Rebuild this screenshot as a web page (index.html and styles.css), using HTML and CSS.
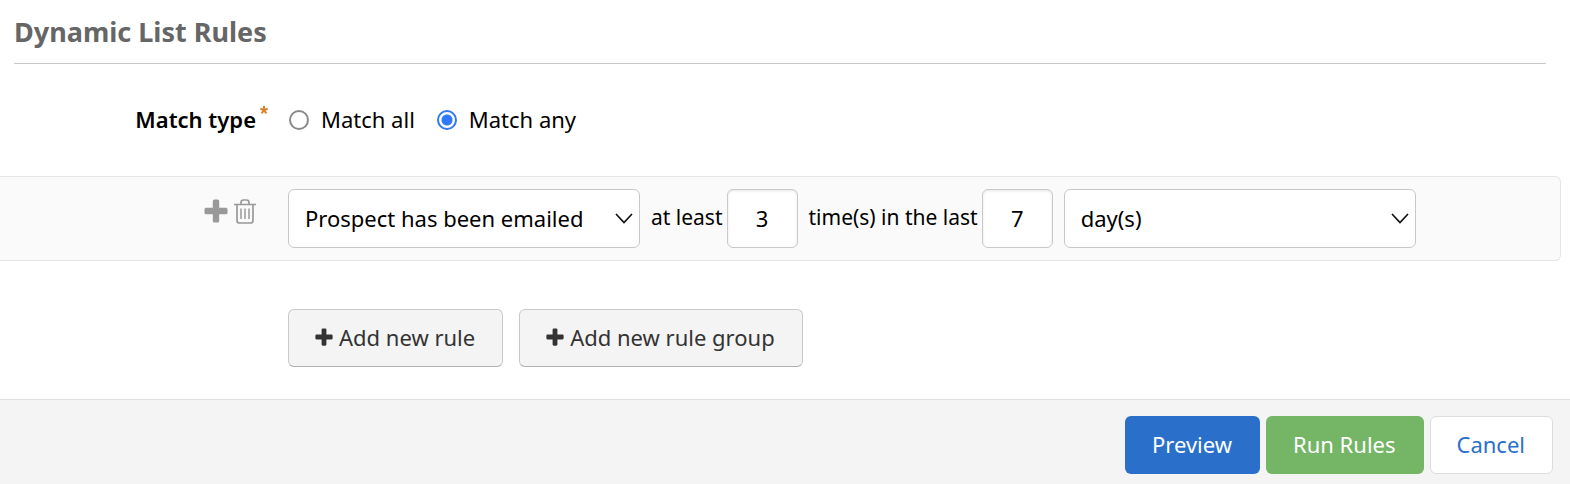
FILE: index.html
```html
<!DOCTYPE html>
<html lang="en">
<head>
<meta charset="utf-8">
<title>Dynamic List Rules</title>
<link rel="stylesheet" href="styles.css">
</head>
<body>
<svg class="sprite" aria-hidden="true">
  <symbol id="plus" viewBox="0 0 24 24">
    <path d="M10.300 .5h3.400q1.500 0 1.500 1.500v6.800h6.800q1.500 0 1.500 1.500v3.400q0 1.500-1.500 1.500h-6.800v6.800q0 1.500-1.500 1.500h-3.400q-1.500 0-1.500-1.500v-6.800H2q-1.500 0-1.500-1.500v-3.400q0-1.500 1.500-1.500h6.800V2q0-1.500 1.500-1.500z" fill="currentColor"/>
  </symbol>
</svg>
<form class="page">
  <h1 class="title">Dynamic List Rules</h1>

  <div class="match" role="radiogroup" aria-labelledby="match-label">
    <div class="match-label"><span id="match-label">Match type</span><svg class="required" viewBox="0 0 8 8" aria-hidden="true"><path d="M4 4V0M4 4L.3 2.800M4 4l3.700-1.200M4 4L1.700 7.400M4 4l2.300 3.400"/></svg></div>
    <div class="match-options">
      <label class="option"><input class="radio" type="radio" name="match">Match all</label>
      <label class="option"><input class="radio" type="radio" name="match" checked>Match any</label>
    </div>
  </div>

  <div class="rule">
    <div class="rule-tools">
      <button class="tool" type="button" aria-label="Add rule"><svg class="tool-plus"><use href="#plus"/></svg></button>
      <button class="tool" type="button" aria-label="Delete rule">
        <svg class="tool-trash" viewBox="0 0 22 25" fill="none" stroke="currentColor" stroke-width="1.700">
          <path d="M0 5.500h22M7 5V3.500q0-2.500 2.500-2.500h3q2.500 0 2.500 2.500V5M3 5.500v16q0 2.500 2.500 2.500h11q2.500 0 2.500-2.500v-16"/>
          <path d="M7 9.500v10.500M11 9.500v10.500M15 9.500v10.500" stroke-width="1.500"/>
        </svg>
      </button>
    </div>
    <div class="rule-fields">
      <div class="select-wrap">
        <select class="field select" aria-label="Criteria"><option>Prospect has been emailed</option></select>
        <svg class="chevron" viewBox="0 0 18 11"><path d="M1 1l8 8.500L17 1"/></svg>
      </div>
      <label class="words first" for="count">at least</label>
      <input class="field number" id="count" type="text" value="3">
      <label class="words second" for="period">time(s) in the last</label>
      <input class="field number last" id="period" type="text" value="7">
      <div class="select-wrap">
        <select class="field select" aria-label="Unit"><option>day(s)</option></select>
        <svg class="chevron" viewBox="0 0 18 11"><path d="M1 1l8 8.500L17 1"/></svg>
      </div>
    </div>
  </div>

  <div class="adders">
    <button class="btn add" type="button"><svg class="add-icon"><use href="#plus"/></svg>Add new rule</button>
    <button class="btn add" type="button"><svg class="add-icon"><use href="#plus"/></svg>Add new rule group</button>
  </div>

  <footer class="footer">
    <button class="btn primary" type="button">Preview</button>
    <button class="btn success" type="submit">Run Rules</button>
    <a class="btn cancel" href="#">Cancel</a>
  </footer>
</form>
</body>
</html>
```
FILE: styles.css
```css
* { box-sizing: border-box; }

body {
  margin: 0;
  background: #fff;
  color: #000;
  font: 22px/30px "Noto Sans", "Open Sans", sans-serif;
}

.sprite { display: none; }

.page {
  display: flex;
  flex-direction: column;
  min-height: 100vh;
}

.title {
  margin: 0 24px 0 14px;
  padding: 14px 0 13px;
  border-bottom: 1px solid #c9c9c9;
  color: #666;
  font-size: 27px;
  line-height: 36px;
  font-weight: 700;
}

.match {
  display: grid;
  grid-template-columns: 268px 1fr;
  column-gap: 21px;
  margin-top: 40px;
}

.match-label {
  display: flex;
  justify-content: flex-end;
  gap: 4px;
  font-weight: 600;
}

.required {
  width: 8px;
  height: 8px;
  margin-top: 2px;
  stroke: #d9822b;
  stroke-width: 2;
  fill: none;
}

.match-options { display: flex; gap: 22px; }

.option { display: flex; align-items: center; gap: 12px; }

.radio {
  appearance: none;
  width: 20px;
  height: 20px;
  margin: 2px 0 0;
  border: 2px solid #8a8a8a;
  border-radius: 50%;
  background: #fff;
}

.radio:checked {
  border-color: #2f78f7;
  background: radial-gradient(circle, #2f78f7 5px, #fff 6px);
}

.rule {
  display: grid;
  grid-template-columns: 256px 1fr;
  column-gap: 32px;
  margin: 42px 9px 0 0;
  padding: 12px 0;
  border: 1px solid #e5e5e5;
  border-left: 0;
  border-radius: 0 6px 6px 0;
  background: #fafafa;
}

.rule-tools {
  display: flex;
  justify-content: flex-end;
  align-items: flex-start;
  gap: 6px;
  padding-top: 10px;
}

.tool {
  display: block;
  padding: 0;
  border: 0;
  background: none;
  color: #999;
}

.tool svg { display: block; }
.tool-plus { width: 24px; height: 24px; }
.tool-trash { width: 22px; height: 25px; }

.rule-fields { display: flex; align-items: center; }

.select-wrap { position: relative; width: 352px; }

.field {
  height: 59px;
  border: 1px solid #c9c9c9;
  border-radius: 6px;
  background: #fff;
  color: #000;
  font: inherit;
}

.select {
  appearance: none;
  display: block;
  width: 100%;
  padding: 0 40px 2px 16px;
}

.chevron {
  position: absolute;
  right: 7px;
  top: 24px;
  width: 18px;
  height: 11px;
  fill: none;
  stroke: #111;
  stroke-width: 1.700;
  pointer-events: none;
}

.number {
  width: 71px;
  padding: 0 0 2px;
  text-align: center;
  box-shadow: inset 0 1px 3px #0000001a;
}

.number.last { margin-right: 11px; }

.words {
  padding-bottom: 4px;
  font-size: 21px;
  white-space: nowrap;
}

.words.first { margin: 0 4px 0 11px; }
.words.second { margin: 0 4px 0 11px; }

.adders {
  display: flex;
  gap: 16px;
  margin: 48px 0 32px 288px;
}

.btn {
  display: flex;
  align-items: center;
  height: 58px;
  padding: 0 27px 2px 26px;
  border: 1px solid transparent;
  border-radius: 6px;
  font: inherit;
  text-decoration: none;
  white-space: nowrap;
}

.add {
  gap: 6px;
  border-color: #c9c9c9;
  border-bottom-color: #b0b0b0;
  background: #f4f4f4;
  color: #333;
}

.add-icon { width: 18px; height: 18px; }

.footer {
  display: flex;
  flex: 1;
  justify-content: flex-end;
  align-items: flex-start;
  gap: 6px;
  padding: 16px 17px 10px;
  border-top: 1px solid #e0e0e0;
  background: #f4f4f4;
}

.primary { background: #2a70cb; color: #fff; }
.success { background: #75b566; color: #fff; }
.cancel { border-color: #ddd; background: #fff; color: #2a70cb; }
```
